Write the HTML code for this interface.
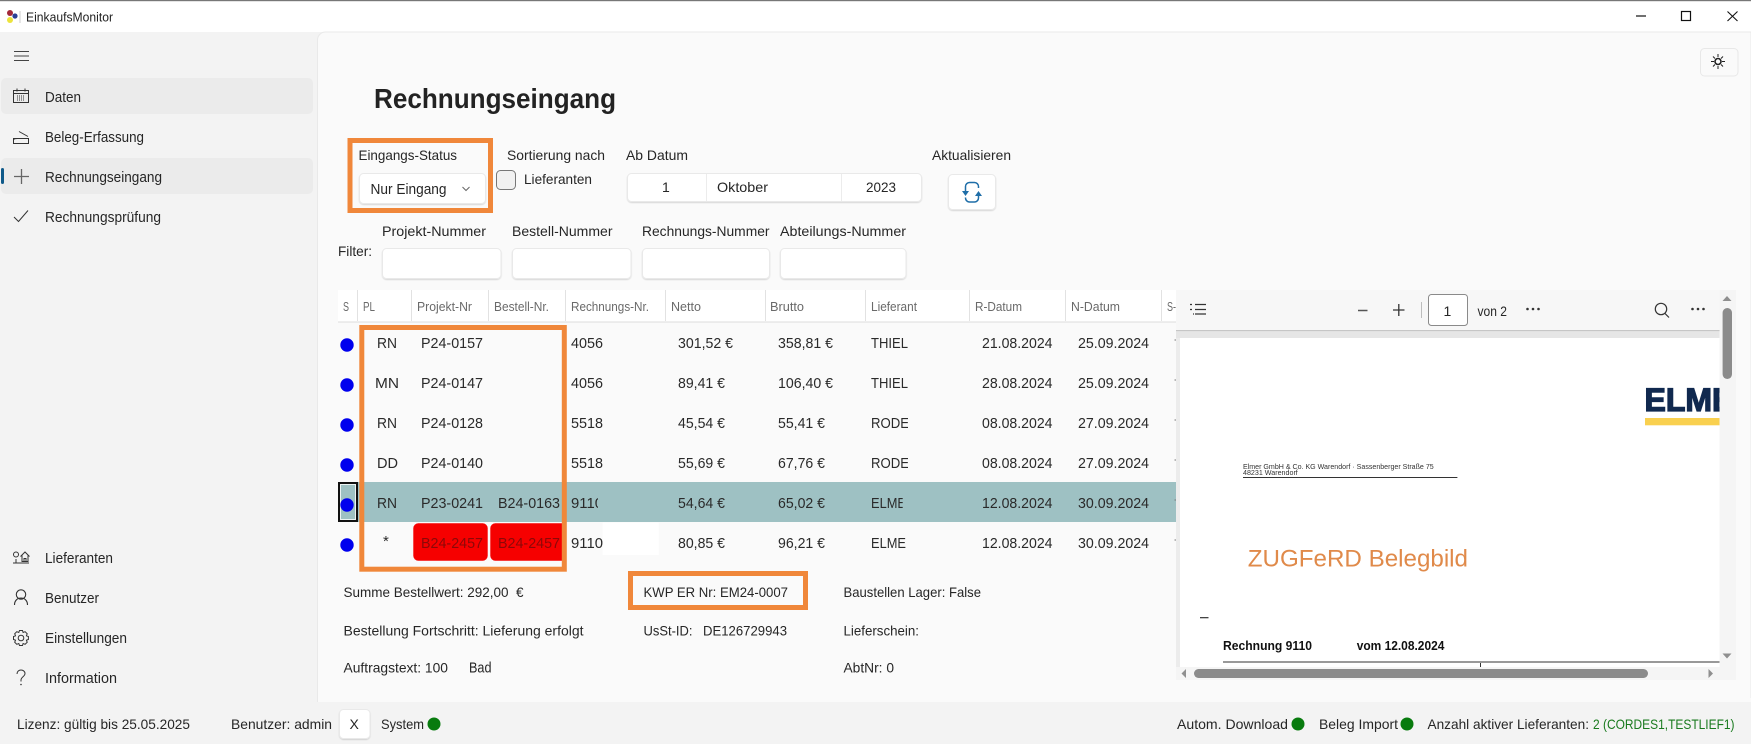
<!DOCTYPE html>
<html lang="de">
<head>
<meta charset="utf-8">
<title>EinkaufsMonitor</title>
<style>
html,body{margin:0;padding:0;width:1751px;height:744px;overflow:hidden;background:#f3f3f3}
svg{display:block}
text{font-family:"Liberation Sans",sans-serif;fill:#222;font-size:14px}
.n{font-size:14.5px;fill:#262626}
.l{font-size:14px;fill:#262626}
.h{font-size:12.5px;fill:#6a6a6a}
.c{font-size:15px;fill:#2a2a2a}
.i{fill:none;stroke:#333;stroke-width:1}
.f{fill:#fff;stroke:#e9e9e9}
.o{fill:none;stroke:#f0873a;stroke-width:5}
</style>
</head>
<body>
<svg width="1751" height="744" viewBox="0 0 1751 744" xmlns="http://www.w3.org/2000/svg">
<defs>
<clipPath id="c1"><rect x="565" y="482" width="33" height="40"/></clipPath>
<clipPath id="c2"><rect x="865" y="482" width="37.700" height="40"/></clipPath>
<clipPath id="c3"><rect x="865" y="402" width="43" height="80"/></clipPath>
<clipPath id="c4"><rect x="1180" y="338" width="539.600" height="329"/></clipPath>
<clipPath id="c5"><rect x="490" y="523" width="72" height="38"/></clipPath>
<filter id="s" x="-10%" y="-10%" width="120%" height="130%"><feDropShadow dx="0" dy="1" stdDeviation="0.5" flood-color="#000" flood-opacity="0.14"/></filter>
</defs>

<!-- window -->
<rect width="1751" height="744" fill="#f3f3f3"/>
<rect width="1751" height="32" fill="#fff"/>
<rect width="1751" height="1.200" fill="#777"/>
<circle cx="10" cy="13" r="3" fill="#a3283a"/>
<circle cx="15" cy="16" r="2.600" fill="#2b3f96"/>
<circle cx="10" cy="20" r="3" fill="#ece33c"/>
<rect x="19.500" y="11" width="1" height="12" fill="#ccc"/>
<text x="26" y="21.500" style="font-size:12.5px" textLength="87" lengthAdjust="spacingAndGlyphs">EinkaufsMonitor</text>
<path d="M1636 16h10" stroke="#111" stroke-width="1.200"/>
<rect x="1681.500" y="11.500" width="9" height="9" fill="none" stroke="#111" stroke-width="1.200"/>
<path d="M1727.500 11.500l10 9.500M1737.500 11.500l-10 9.500" stroke="#111" stroke-width="1.100" fill="none"/>

<!-- content area -->
<path d="M317.500 701.500V40a8 8 0 0 1 8-8H1751V701.500Z" fill="#fafafa" stroke="#e9e9e9"/>
<rect x="318" y="698" width="1433" height="4" fill="#fafafa"/>

<!-- sidebar -->
<path d="M14 51.500h15M14 56h15M14 60.500h15" stroke="#444" stroke-width="1"/>
<rect x="1" y="78" width="312" height="36" rx="5" fill="#ebebeb"/>
<rect x="1" y="158" width="312" height="36" rx="5" fill="#ebebeb"/>
<rect x="1" y="168" width="3" height="16" rx="1.500" fill="#0f5a8a"/>

<g class="i">
<rect x="13.500" y="90.500" width="15" height="12"/>
<path d="M13.500 93.500h15M17 88.500v3M25 88.500v3"/>
<path d="M17 96h8M17 98h8M17 100h8" stroke-dasharray="1 1"/>
<path d="M19 131.500l9 5M13.500 138.500h15v5h-15zM13.500 140c0-1 2-1.500 4-1.500"/>
<path d="M14 176.500h15M21.500 169v15" stroke="#666" stroke-width="1.300"/>
<path d="M14 217l4.500 4.500L28 210.500"/>
<path d="M13 563h16M16 563v-4"/><circle cx="16" cy="554.500" r="2.500"/>
<path d="M20.500 556.500l4.500-4.500 4.500 4.500M22 555.500v6h6v-6M24 561.500v-3h2v3"/>
<circle cx="21" cy="594.500" r="4.700" style="stroke-width:1.100"/>
<path d="M14.500 605c0-4.500 3-7 6.500-7s6.500 2.500 6.500 7" style="stroke-width:1.100"/>
<circle cx="21" cy="638" r="2.800"/>
<path d="M19.500 630.500h3l.6 2 2-.8 2.100 2.100-.8 2 2 .7v3l-2 .7.8 2-2.100 2.100-2-.8-.6 2h-3l-.7-2-2 .8-2.100-2.100.8-2-2-.7v-3l2-.7-.8-2 2.100-2.100 2 .8z"/>
<path d="M17 674c0-2.700 2-4 4-4s4 1.300 4 3.500c0 3-4 3.500-4 6.500v1.500" />
</g>
<circle cx="21" cy="684.500" r=".8" fill="#333"/>

<text class="n" x="45" y="102" textLength="36" lengthAdjust="spacingAndGlyphs">Daten</text>
<text class="n" x="45" y="142" textLength="99" lengthAdjust="spacingAndGlyphs">Beleg-Erfassung</text>
<text class="n" x="45" y="182" textLength="117" lengthAdjust="spacingAndGlyphs">Rechnungseingang</text>
<text class="n" x="45" y="222" textLength="116" lengthAdjust="spacingAndGlyphs">Rechnungsprüfung</text>
<text class="n" x="45" y="563" textLength="68" lengthAdjust="spacingAndGlyphs">Lieferanten</text>
<text class="n" x="45" y="603" textLength="54" lengthAdjust="spacingAndGlyphs">Benutzer</text>
<text class="n" x="45" y="643" textLength="82" lengthAdjust="spacingAndGlyphs">Einstellungen</text>
<text class="n" x="45" y="683" textLength="72" lengthAdjust="spacingAndGlyphs">Information</text>

<!-- theme button -->
<rect x="1700.500" y="48.500" width="37.500" height="27.500" rx="4" fill="#fafafa" stroke="#e8e8e8"/>
<circle cx="1718" cy="61.500" r="3" fill="#fff" stroke="#222" stroke-width="1.600"/>
<path d="M1718 54v3M1718 66v3M1711 61.500h3M1722 61.500h3M1713 56.500l2 2M1721 64.500l2 2M1723 56.500l-2 2M1715 64.500l-2 2" stroke="#222" stroke-width="1"/>

<!-- heading -->
<text x="374" y="108" style="font-size:28px;font-weight:700;fill:#222" textLength="242" lengthAdjust="spacingAndGlyphs">Rechnungseingang</text>

<!-- top controls -->
<rect class="f" x="359.500" y="173.500" width="126" height="30" rx="4" filter="url(#s)"/>
<text class="l" x="358.500" y="160" textLength="98.500" lengthAdjust="spacingAndGlyphs">Eingangs-Status</text>
<text class="l" x="370.500" y="194" style="font-size:14.5px" textLength="76" lengthAdjust="spacingAndGlyphs">Nur Eingang</text>
<path d="M462.500 187l3.500 3.500 3.500-3.500" fill="none" stroke="#666" stroke-width="1"/>
<rect class="o" x="350" y="140.500" width="140.500" height="70"/>

<text class="l" x="507" y="160" textLength="98" lengthAdjust="spacingAndGlyphs">Sortierung nach</text>
<rect x="496.500" y="170.500" width="19" height="19" rx="4" fill="#f1f1f1" stroke="#777"/>
<text class="l" x="524" y="184" textLength="68" lengthAdjust="spacingAndGlyphs">Lieferanten</text>
<text class="l" x="626" y="160" textLength="62" lengthAdjust="spacingAndGlyphs">Ab Datum</text>
<rect class="f" x="627.500" y="173.500" width="294" height="28" rx="4" filter="url(#s)"/>
<path d="M706.500 174v27M841.500 174v27" stroke="#ececec"/>
<text class="l" x="662" y="192">1</text>
<text class="l" x="717" y="192" textLength="51" lengthAdjust="spacingAndGlyphs">Oktober</text>
<text class="l" x="866" y="192" textLength="30" lengthAdjust="spacingAndGlyphs">2023</text>
<text class="l" x="932" y="160" textLength="79" lengthAdjust="spacingAndGlyphs">Aktualisieren</text>
<rect class="f" x="948.500" y="174.500" width="47" height="35" rx="4" filter="url(#s)"/>
<g fill="none" stroke="#1f6ea8" stroke-width="1.500">
<path d="M978.500 188v-1.500a4 4 0 0 0-4-4h-5a4 4 0 0 0-4 4v5"/>
<path d="M965.500 197.500v.5a4 4 0 0 0 4 4h5a4 4 0 0 0 4-4v-3"/>
</g>
<path d="M962 191h7l-3.500 5zM975 196h7l-3.500-5z" fill="#1f6ea8"/>

<!-- filters -->
<text class="l" x="338" y="256" textLength="34" lengthAdjust="spacingAndGlyphs">Filter:</text>
<text class="l" x="382" y="236" textLength="104" lengthAdjust="spacingAndGlyphs">Projekt-Nummer</text>
<text class="l" x="512" y="236" textLength="100.500" lengthAdjust="spacingAndGlyphs">Bestell-Nummer</text>
<text class="l" x="642" y="236" textLength="127.500" lengthAdjust="spacingAndGlyphs">Rechnungs-Nummer</text>
<text class="l" x="780" y="236" textLength="126" lengthAdjust="spacingAndGlyphs">Abteilungs-Nummer</text>
<rect class="f" x="382.500" y="248.500" width="118.500" height="30" rx="4" filter="url(#s)"/>
<rect class="f" x="512.500" y="248.500" width="118.500" height="30" rx="4" filter="url(#s)"/>
<rect class="f" x="642.500" y="248.500" width="127" height="30" rx="4" filter="url(#s)"/>
<rect class="f" x="780.500" y="248.500" width="125.500" height="30" rx="4" filter="url(#s)"/>

<!-- table header -->
<rect x="338" y="290" width="838" height="32" fill="#fff"/>
<path d="M338 322h838" stroke="#dcdcdc" stroke-width="1"/>
<path d="M357.500 290v31M411.500 290v31M488.500 290v31M565.500 290v31M665.500 290v31M765.500 290v31M865.500 290v31M969.500 290v31M1065.500 290v31M1161.500 290v31" stroke="#e2e2e2"/>
<text class="h" x="343" y="311" textLength="6" lengthAdjust="spacingAndGlyphs">S</text>
<text class="h" x="363" y="311" textLength="12" lengthAdjust="spacingAndGlyphs">PL</text>
<text class="h" x="417" y="311" textLength="55" lengthAdjust="spacingAndGlyphs">Projekt-Nr</text>
<text class="h" x="494" y="311" textLength="55" lengthAdjust="spacingAndGlyphs">Bestell-Nr.</text>
<text class="h" x="571" y="311" textLength="78" lengthAdjust="spacingAndGlyphs">Rechnungs-Nr.</text>
<text class="h" x="671" y="311" textLength="30" lengthAdjust="spacingAndGlyphs">Netto</text>
<text class="h" x="770" y="311" textLength="34" lengthAdjust="spacingAndGlyphs">Brutto</text>
<text class="h" x="871" y="311" textLength="46" lengthAdjust="spacingAndGlyphs">Lieferant</text>
<text class="h" x="975" y="311" textLength="47" lengthAdjust="spacingAndGlyphs">R-Datum</text>
<text class="h" x="1071" y="311" textLength="49" lengthAdjust="spacingAndGlyphs">N-Datum</text>
<text class="h" x="1167" y="311" textLength="9" lengthAdjust="spacingAndGlyphs">S-</text>

<!-- selected row -->
<rect x="358" y="482" width="818" height="40" fill="#9ec1c3"/>
<rect x="339" y="483" width="18" height="38" fill="#9ec1c3" stroke="#111" stroke-width="2"/>
<rect x="340.500" y="484.500" width="15" height="35" fill="none" stroke="#fff" stroke-width=".8"/>

<!-- white patch + red cells -->
<rect x="602.700" y="522.700" width="56" height="32.300" fill="#fff"/>
<rect x="413.300" y="523.300" width="74.400" height="37.400" rx="5" fill="#f60000"/>
<rect x="490.300" y="523.300" width="80" height="37.400" rx="5" fill="#f60000" clip-path="url(#c5)"/>

<!-- dots -->
<g fill="#0000ee">
<circle cx="347" cy="345" r="6.700"/><circle cx="347" cy="385" r="6.700"/><circle cx="347" cy="425" r="6.700"/><circle cx="347" cy="465" r="6.700"/><circle cx="347" cy="505" r="6.700"/><circle cx="347" cy="545" r="6.700"/>
</g>

<!-- ticks of next column -->
<path d="M1174.500 340h1.500M1174.500 380h1.500M1174.500 420h1.500M1174.500 460h1.500M1174.500 500h1.500M1174.500 540h1.500" stroke="#777"/>

<!-- row 1 -->
<text class="c" x="377" y="348" textLength="20" lengthAdjust="spacingAndGlyphs">RN</text>
<text class="c" x="421" y="348" textLength="62" lengthAdjust="spacingAndGlyphs">P24-0157</text>
<text class="c" x="571" y="348" textLength="32" lengthAdjust="spacingAndGlyphs">4056</text>
<text class="c" x="678" y="348" textLength="55" lengthAdjust="spacingAndGlyphs">301,52 €</text>
<text class="c" x="778" y="348" textLength="55" lengthAdjust="spacingAndGlyphs">358,81 €</text>
<text class="c" x="871" y="348" textLength="37" lengthAdjust="spacingAndGlyphs">THIEL</text>
<text class="c" x="982" y="348" textLength="70.500" lengthAdjust="spacingAndGlyphs">21.08.2024</text>
<text class="c" x="1078" y="348" textLength="71" lengthAdjust="spacingAndGlyphs">25.09.2024</text>
<!-- row 2 -->
<text class="c" x="375" y="388" textLength="24" lengthAdjust="spacingAndGlyphs">MN</text>
<text class="c" x="421" y="388" textLength="62" lengthAdjust="spacingAndGlyphs">P24-0147</text>
<text class="c" x="571" y="388" textLength="32" lengthAdjust="spacingAndGlyphs">4056</text>
<text class="c" x="678" y="388" textLength="47" lengthAdjust="spacingAndGlyphs">89,41 €</text>
<text class="c" x="778" y="388" textLength="55" lengthAdjust="spacingAndGlyphs">106,40 €</text>
<text class="c" x="871" y="388" textLength="37" lengthAdjust="spacingAndGlyphs">THIEL</text>
<text class="c" x="982" y="388" textLength="70.500" lengthAdjust="spacingAndGlyphs">28.08.2024</text>
<text class="c" x="1078" y="388" textLength="71" lengthAdjust="spacingAndGlyphs">25.09.2024</text>
<!-- row 3 -->
<text class="c" x="377" y="428" textLength="20" lengthAdjust="spacingAndGlyphs">RN</text>
<text class="c" x="421" y="428" textLength="62" lengthAdjust="spacingAndGlyphs">P24-0128</text>
<text class="c" x="571" y="428" textLength="32" lengthAdjust="spacingAndGlyphs">5518</text>
<text class="c" x="678" y="428" textLength="47" lengthAdjust="spacingAndGlyphs">45,54 €</text>
<text class="c" x="778" y="428" textLength="47" lengthAdjust="spacingAndGlyphs">55,41 €</text>
<text class="c" x="871" y="428" clip-path="url(#c3)" textLength="38" lengthAdjust="spacingAndGlyphs">RODE</text>
<text class="c" x="982" y="428" textLength="70.500" lengthAdjust="spacingAndGlyphs">08.08.2024</text>
<text class="c" x="1078" y="428" textLength="71" lengthAdjust="spacingAndGlyphs">27.09.2024</text>
<!-- row 4 -->
<text class="c" x="377" y="468" textLength="21" lengthAdjust="spacingAndGlyphs">DD</text>
<text class="c" x="421" y="468" textLength="62" lengthAdjust="spacingAndGlyphs">P24-0140</text>
<text class="c" x="571" y="468" textLength="32" lengthAdjust="spacingAndGlyphs">5518</text>
<text class="c" x="678" y="468" textLength="47" lengthAdjust="spacingAndGlyphs">55,69 €</text>
<text class="c" x="778" y="468" textLength="47" lengthAdjust="spacingAndGlyphs">67,76 €</text>
<text class="c" x="871" y="468" clip-path="url(#c3)" textLength="38" lengthAdjust="spacingAndGlyphs">RODE</text>
<text class="c" x="982" y="468" textLength="70.500" lengthAdjust="spacingAndGlyphs">08.08.2024</text>
<text class="c" x="1078" y="468" textLength="71" lengthAdjust="spacingAndGlyphs">27.09.2024</text>
<!-- row 5 -->
<text class="c" x="377" y="508" textLength="20" lengthAdjust="spacingAndGlyphs">RN</text>
<text class="c" x="421" y="508" textLength="62" lengthAdjust="spacingAndGlyphs">P23-0241</text>
<text class="c" x="498" y="508" textLength="62" lengthAdjust="spacingAndGlyphs">B24-0163</text>
<text class="c" x="571" y="508" clip-path="url(#c1)" textLength="32" lengthAdjust="spacingAndGlyphs">9110</text>
<text class="c" x="678" y="508" textLength="47" lengthAdjust="spacingAndGlyphs">54,64 €</text>
<text class="c" x="778" y="508" textLength="47" lengthAdjust="spacingAndGlyphs">65,02 €</text>
<text class="c" x="871" y="508" clip-path="url(#c2)" textLength="35" lengthAdjust="spacingAndGlyphs">ELME</text>
<text class="c" x="982" y="508" textLength="70.500" lengthAdjust="spacingAndGlyphs">12.08.2024</text>
<text class="c" x="1078" y="508" textLength="71" lengthAdjust="spacingAndGlyphs">30.09.2024</text>
<!-- row 6 -->
<text class="c" x="383" y="546">*</text>
<text class="c" x="421" y="548" style="fill:#8c0808" textLength="62" lengthAdjust="spacingAndGlyphs">B24-2457</text>
<text class="c" x="498" y="548" style="fill:#8c0808" textLength="62" lengthAdjust="spacingAndGlyphs">B24-2457</text>
<text class="c" x="571" y="548" textLength="32" lengthAdjust="spacingAndGlyphs">9110</text>
<text class="c" x="678" y="548" textLength="47" lengthAdjust="spacingAndGlyphs">80,85 €</text>
<text class="c" x="778" y="548" textLength="47" lengthAdjust="spacingAndGlyphs">96,21 €</text>
<text class="c" x="871" y="548" textLength="35" lengthAdjust="spacingAndGlyphs">ELME</text>
<text class="c" x="982" y="548" textLength="70.500" lengthAdjust="spacingAndGlyphs">12.08.2024</text>
<text class="c" x="1078" y="548" textLength="71" lengthAdjust="spacingAndGlyphs">30.09.2024</text>

<!-- orange highlight round columns -->
<rect class="o" x="361.800" y="327.500" width="202.500" height="241.700"/>

<!-- info area -->
<text class="l" x="343.500" y="597" textLength="180" lengthAdjust="spacingAndGlyphs" xml:space="preserve">Summe Bestellwert: 292,00  €</text>
<text class="l" x="343.500" y="635.700" textLength="240" lengthAdjust="spacingAndGlyphs">Bestellung Fortschritt: Lieferung erfolgt</text>
<text class="l" x="343.500" y="672.700" textLength="104.500" lengthAdjust="spacingAndGlyphs">Auftragstext: 100</text>
<text class="l" x="469" y="672.500" style="font-size:14.5px" textLength="22.500" lengthAdjust="spacingAndGlyphs">Bad</text>
<rect class="o" x="630.500" y="573.500" width="175" height="34"/>
<text class="l" x="643.500" y="597" textLength="144.500" lengthAdjust="spacingAndGlyphs">KWP ER Nr: EM24-0007</text>
<text class="l" x="643.500" y="635.700" textLength="49" lengthAdjust="spacingAndGlyphs">UsSt-ID:</text>
<text class="l" x="703" y="635.700" textLength="84" lengthAdjust="spacingAndGlyphs">DE126729943</text>
<text class="l" x="843.500" y="597" textLength="137.500" lengthAdjust="spacingAndGlyphs">Baustellen Lager: False</text>
<text class="l" x="843.500" y="635.700" textLength="75.500" lengthAdjust="spacingAndGlyphs">Lieferschein:</text>
<text class="l" x="843.500" y="672.700" textLength="50.500" lengthAdjust="spacingAndGlyphs">AbtNr: 0</text>

<!-- pdf viewer -->
<rect x="1176" y="290" width="560" height="390" fill="#f4f4f4"/>
<rect x="1176" y="290" width="543.600" height="40" fill="#f7f7f7"/>
<rect x="1176" y="330" width="543.600" height="1.300" fill="#c6c6c6"/>
<rect x="1176" y="331.300" width="543.600" height="7" fill="#e6e6e6"/>
<rect x="1176" y="338" width="4" height="329" fill="#ececec"/>
<rect x="1180" y="338" width="539.600" height="329" fill="#fff"/>

<g stroke="#333" stroke-width="1.200" fill="none">
<path d="M1195 304.500h11M1195 309.500h11M1195 314h11"/>
<path d="M1190 304.500h2M1190 309.500h2M1193 314h1"/>
<path d="M1358 310.500h9.500" stroke-width="1.500" stroke="#555"/>
<path d="M1393 310h11.500M1398.800 304v12" stroke-width="1.300"/>
<circle cx="1661" cy="309" r="5.700"/>
<path d="M1665 313.500l4 4"/>
</g>
<rect x="1421" y="302" width="1" height="16" fill="#bdbdbd"/>
<rect x="1428.500" y="294.500" width="39" height="31" rx="3" fill="#fff" stroke="#8a8a8a"/>
<text class="l" x="1443.500" y="316">1</text>
<text class="l" x="1477.500" y="316" textLength="29.500" lengthAdjust="spacingAndGlyphs">von 2</text>
<g fill="#333">
<circle cx="1527.500" cy="309" r="1.300"/><circle cx="1533" cy="309" r="1.300"/><circle cx="1538.500" cy="309" r="1.300"/>
<circle cx="1692.500" cy="309" r="1.300"/><circle cx="1698" cy="309" r="1.300"/><circle cx="1703.500" cy="309" r="1.300"/>
</g>

<!-- pdf page -->
<g clip-path="url(#c4)">
<text x="1644.500" y="411" style="font-size:32px;font-weight:700;fill:#10294f;stroke:#10294f;stroke-width:1.300" textLength="112" lengthAdjust="spacingAndGlyphs">ELMER</text>
<rect x="1645" y="418" width="80" height="7.300" fill="#f9d04f"/>
<text x="1243" y="469" style="font-size:7.2px;fill:#333" textLength="190.700" lengthAdjust="spacingAndGlyphs">Elmer GmbH &amp; Co. KG Warendorf · Sassenberger Straße 75</text>
<text x="1243" y="475" style="font-size:7.2px;fill:#333" textLength="54.800" lengthAdjust="spacingAndGlyphs">48231 Warendorf</text>
<rect x="1243" y="477" width="214.400" height="1" fill="#333"/>
<text x="1247.800" y="566.500" style="font-size:24px;fill:#e08a4a" textLength="220.200" lengthAdjust="spacingAndGlyphs">ZUGFeRD Belegbild</text>
<rect x="1200" y="617" width="8.500" height="1.300" fill="#444"/>
<text x="1223" y="650" style="font-size:12.500px;font-weight:700;fill:#111" textLength="89" lengthAdjust="spacingAndGlyphs">Rechnung 9110</text>
<text x="1356.700" y="650" style="font-size:12.500px;font-weight:700;fill:#111" textLength="87.700" lengthAdjust="spacingAndGlyphs">vom 12.08.2024</text>
<rect x="1223" y="661.500" width="497" height="1" fill="#333"/>
<rect x="1480" y="663" width="1" height="4" fill="#333"/>
</g>

<!-- pdf scrollbars -->
<rect x="1719.600" y="290" width="16.400" height="390" fill="#f5f5f5"/>
<rect x="1176" y="667" width="560" height="13" fill="#f5f5f5"/>
<rect x="1722.600" y="308" width="9.400" height="71" rx="4.700" fill="#8b8b8b"/>
<rect x="1194" y="669" width="454" height="9" rx="4.500" fill="#8b8b8b"/>
<path d="M1727 296l4.500 5h-9zM1727 658.500l4.500-5h-9zM1181.500 673.500l4.500-4.500v9zM1713 673.500l-4.500-4.500v9z" fill="#8f8f8f"/>

<!-- status bar -->
<rect x="0" y="702" width="1751" height="42" fill="#f3f3f3"/>
<text class="l" x="17" y="729" textLength="173" lengthAdjust="spacingAndGlyphs">Lizenz: gültig bis 25.05.2025</text>
<text class="l" x="231" y="729" textLength="101" lengthAdjust="spacingAndGlyphs">Benutzer: admin</text>
<rect class="f" x="339.500" y="709.500" width="30.500" height="29" rx="4" filter="url(#s)"/>
<text class="l" x="349.500" y="729">X</text>
<text class="l" x="381" y="729" textLength="43" lengthAdjust="spacingAndGlyphs">System</text>
<circle cx="434" cy="724" r="6.500" fill="#087b0e"/>
<text class="l" x="1177" y="729" textLength="111" lengthAdjust="spacingAndGlyphs">Autom. Download</text>
<circle cx="1298" cy="724" r="6.500" fill="#087b0e"/>
<text class="l" x="1319" y="729" textLength="79" lengthAdjust="spacingAndGlyphs">Beleg Import</text>
<circle cx="1407" cy="724" r="6.500" fill="#087b0e"/>
<text class="l" x="1427.500" y="729" textLength="161.500" lengthAdjust="spacingAndGlyphs">Anzahl aktiver Lieferanten:</text>
<text class="l" x="1593" y="729" style="fill:#197a1e" textLength="141.500" lengthAdjust="spacingAndGlyphs">2 (CORDES1,TESTLIEF1)</text>
</svg>
</body>
</html>
